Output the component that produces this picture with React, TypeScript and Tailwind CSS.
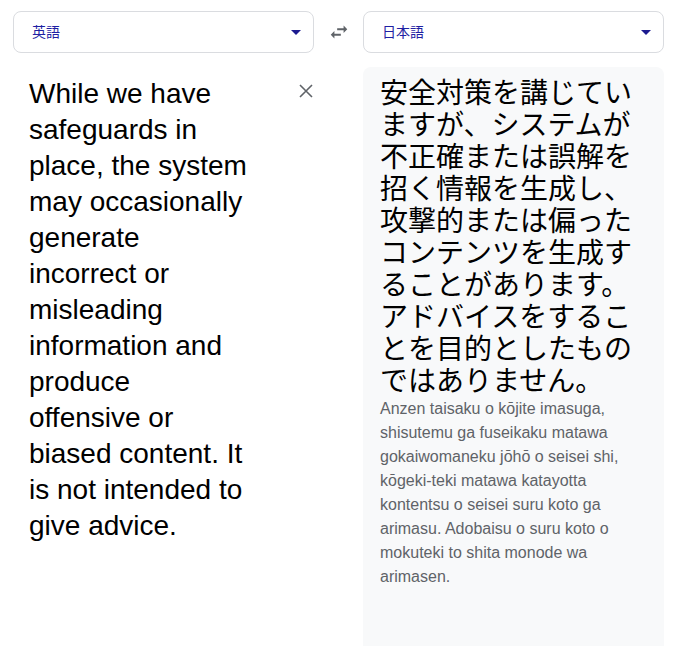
import React from "react";

const jp = '"Noto Sans CJK JP", "Liberation Sans", sans-serif';

function Caret() {
  return (
    <svg width="10" height="5" viewBox="0 0 10 5" className="shrink-0">
      <path d="M0 0h10L5 5z" fill="#1c1a8f" />
    </svg>
  );
}

function LangSelect({ label }: { label: string }) {
  return (
    <div className="flex h-[42px] items-center justify-between rounded-lg border border-[#dadce0] bg-white pl-[18px] pr-[12px]">
      <span className="-mt-[2px] text-[14px] text-[#1f1fa3]" style={{ fontFamily: jp }}>
        {label}
      </span>
      <Caret />
    </div>
  );
}

export default function App() {
  return (
    <div className="min-h-[646px] w-[684px] overflow-hidden bg-white pl-[13px] pt-[11px] font-['Liberation_Sans',sans-serif]">
      <div className="grid grid-cols-[301px_49px_301px] items-center">
        <LangSelect label="英語" />
        <div className="flex justify-center">
          <svg width="22" height="22" viewBox="0 0 24 24">
            <path
              d="M6.99 11L3 15l3.99 4v-3H14v-2H6.99v-3zM21 9l-3.99-4v3H10v2h7.01v3L21 9z"
              fill="#5f6368"
            />
          </svg>
        </div>
        <LangSelect label="日本語" />
      </div>

      <div className="mt-[14px] grid grid-cols-[301px_49px_301px] items-start">
        <div className="flex items-start justify-between pl-4 pt-[9px]">
          <p className="w-[220px] text-[28px] leading-[36px] text-black">
            While we have safeguards in place, the system may occasionally generate incorrect or
            misleading information and produce offensive or biased content. It is not intended to
            give advice.
          </p>
          <svg width="14" height="14" viewBox="0 0 14 14" className="mr-[1px] mt-[8px]">
            <path d="M1 1l12 12M13 1L1 13" stroke="#5f6368" strokeWidth="1.6" />
          </svg>
        </div>
        <div />
        <div className="min-h-[600px] rounded-t-lg bg-[#f8f9fa] px-[17px] pt-[9px]">
          <p className="-mt-[1px] text-[28px] leading-[32px] text-black" style={{ fontFamily: jp }}>
            安全対策を講じていますが、システムが不正確または誤解を招く情報を生成し、攻撃的または偏ったコンテンツを生成することがあります。アドバイスをすることを目的としたものではありません。
          </p>
          <p className="mt-[2px] text-[16px] leading-[24px] text-[#5f6368]">
            Anzen taisaku o kōjite imasuga, shisutemu ga fuseikaku matawa gokaiwomaneku jōhō o
            seisei shi, kōgeki-teki matawa katayotta kontentsu o seisei suru koto ga arimasu.
            Adobaisu o suru koto o mokuteki to shita monode wa arimasen.
          </p>
        </div>
      </div>
    </div>
  );
}
